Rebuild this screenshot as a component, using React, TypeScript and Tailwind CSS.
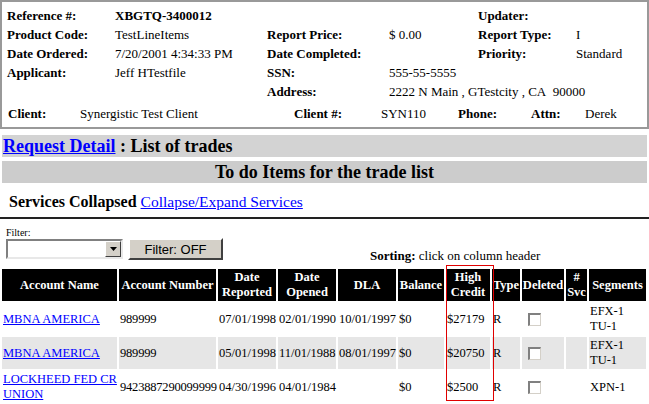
import React from "react";

const serif = "font-['Liberation_Serif','Times_New_Roman',serif]";

function Checkbox() {
  return (
    <div className="ml-[6px] w-[13px] h-[13px] bg-white border-t-2 border-l-2 border-b border-r border-t-[#808080] border-l-[#808080] border-b-[#d4d0c8] border-r-[#d4d0c8]" />
  );
}

type Trade = {
  name: string[];
  number: string;
  reported: string;
  opened: string;
  dla: string;
  balance: string;
  high: string;
  type: string;
  segments: string[];
};

const trades: Trade[] = [
  {
    name: ["MBNA AMERICA"],
    number: "989999",
    reported: "07/01/1998",
    opened: "02/01/1990",
    dla: "10/01/1997",
    balance: "$0",
    high: "$27179",
    type: "R",
    segments: ["EFX-1", "TU-1"],
  },
  {
    name: ["MBNA AMERICA"],
    number: "989999",
    reported: "05/01/1998",
    opened: "11/01/1988",
    dla: "08/01/1997",
    balance: "$0",
    high: "$20750",
    type: "R",
    segments: ["EFX-1", "TU-1"],
  },
  {
    name: ["LOCKHEED FED CR", "UNION"],
    number: "9423887290099999",
    reported: "04/30/1996",
    opened: "04/01/1984",
    dla: "",
    balance: "$0",
    high: "$2500",
    type: "R",
    segments: ["XPN-1"],
  },
];

export default function App() {
  return (
    <div className={`w-[649px] h-[404px] overflow-hidden bg-white text-black ${serif}`}>
      {/* Order summary */}
      <div className="h-[129px] border-2 border-[#999] pt-[4px] pl-[5px] text-[13px]">
        <div className="grid grid-cols-[108px_152px_122px_89px_98px_1fr] auto-rows-[19px] items-center whitespace-nowrap">
          <b>Reference #:</b>
          <b>XBGTQ-3400012</b>
          <span />
          <span />
          <b>Updater:</b>
          <span />

          <b>Product Code:</b>
          <span>TestLineItems</span>
          <b>Report Price:</b>
          <span>$ 0.00</span>
          <b>Report Type:</b>
          <span>I</span>

          <b>Date Ordered:</b>
          <span>7/20/2001 4:34:33 PM</span>
          <b>Date Completed:</b>
          <span />
          <b>Priority:</b>
          <span>Standard</span>

          <b>Applicant:</b>
          <span>Jeff HTestfile</span>
          <b>SSN:</b>
          <span>555-55-5555</span>
          <span />
          <span />

          <span />
          <span />
          <b>Address:</b>
          <span className="col-span-3">2222 N Main , GTestcity , CA&nbsp; 90000</span>
        </div>
        <div className="flex items-center h-[19px] mt-[3px] pl-[1px] whitespace-nowrap">
          <b className="w-[72px]">Client:</b>
          <span className="w-[214px]">Synergistic Test Client</span>
          <b className="w-[87px]">Client #:</b>
          <span className="w-[77px]">SYN110</span>
          <b className="w-[73px]">Phone:</b>
          <b className="w-[54px]">Attn:</b>
          <span>Derek</span>
        </div>
      </div>

      {/* Title bars */}
      <div className="mx-[2px] mt-[6px] h-[22px] bg-[#d3d3d3] pl-[1px] text-[18px] font-bold leading-[22px]">
        <a href="#" className="text-[#0000ff] underline">Request Detail</a> : List of trades
      </div>
      <div className="mx-[2px] mt-[4px] h-[22px] bg-[#cccccc] text-center text-[18px] font-bold leading-[22px]">
        To do Items for the trade list
      </div>

      <div className="mt-[10px] h-[18px] pl-[9px] text-[16px] leading-[18px]">
        <b>Services Collapsed</b>{" "}
        <a href="#" className="text-[#0000ff] underline text-[15.5px]">Collapse/Expand Services</a>
      </div>
      <div className="mt-[6px] h-[2px] bg-[#222]" />

      {/* Filter row */}
      <div className="flex items-end pl-[6px]">
        <div className="flex flex-col">
          <span className="mt-[9px] h-[10px] text-[10px] leading-[10px]">Filter:</span>
          <div className="mt-[1px] flex h-[20px] w-[117px] bg-white border-2 border-t-[#808080] border-l-[#808080] border-b-[#e8e8e8] border-r-[#e8e8e8]">
            <div className="flex-1" />
            <div className="flex w-[16px] items-center justify-center bg-[#d4d0c8] border border-t-white border-l-white border-b-[#404040] border-r-[#404040]">
              <svg width="7" height="4" viewBox="0 0 7 4">
                <path d="M0 0h7L3.5 4z" fill="#000" />
              </svg>
            </div>
          </div>
        </div>
        <button className="ml-[5px] mb-[-1px] h-[22px] w-[95px] bg-[#d4d0c8] border-2 border-t-white border-l-white border-b-[#404040] border-r-[#404040] font-['Liberation_Sans',Arial,sans-serif] text-[13px]">
          Filter: OFF
        </button>
        <div className="ml-[147px] mb-[-5px] text-[13px] leading-[16px] whitespace-nowrap">
          <b>Sorting:</b> click on column header
        </div>
      </div>

      {/* Trade table */}
      <div className="relative mt-[8px]">
        <table className="table-fixed w-[648px] border-separate border-spacing-[2px]">
          <thead>
            <tr className="h-[32px] bg-black text-white text-[12.5px] leading-[15px] font-bold">
              <th className="w-[115px] p-0">Account Name</th>
              <th className="w-[97px] p-0 whitespace-nowrap">Account Number</th>
              <th className="w-[58px] p-0">Date<br />Reported</th>
              <th className="w-[58px] p-0">Date<br />Opened</th>
              <th className="w-[58px] p-0">DLA</th>
              <th className="w-[46px] p-0">Balance</th>
              <th className="w-[44px] p-0">High<br />Credit</th>
              <th className="w-[28px] p-0">Type</th>
              <th className="w-[42px] p-0">Deleted</th>
              <th className="w-[21px] p-0">#<br />Svc</th>
              <th className="w-[57px] p-0">Segments</th>
            </tr>
          </thead>
          <tbody className="text-[12.5px] leading-[15px]">
            {trades.map((t, i) => (
              <tr key={i} className={`h-[32px] ${i === 1 ? "[&>td]:bg-[#e6e6e6]" : ""}`}>
                <td className="pl-[1px] pr-0">
                  <a href="#" className="text-[#0000ff] underline">
                    {t.name.map((n, j) => (
                      <React.Fragment key={j}>
                        {j > 0 && <br />}
                        {n}
                      </React.Fragment>
                    ))}
                  </a>
                </td>
                <td className="pl-[1px] pr-0 whitespace-nowrap tracking-[-0.2px]">{t.number}</td>
                <td className="pl-[1px] pr-0 whitespace-nowrap">{t.reported}</td>
                <td className="pl-[1px] pr-0 whitespace-nowrap">{t.opened}</td>
                <td className="pl-[1px] pr-0 whitespace-nowrap">{t.dla}</td>
                <td className="pl-[1px] pr-0">{t.balance}</td>
                <td className="pl-[1px] pr-0">{t.high}</td>
                <td className="pl-[1px] pr-0">{t.type}</td>
                <td className="p-0">
                  <Checkbox />
                </td>
                <td className="p-0" />
                <td className="pl-[1px] pr-0">
                  {t.segments.map((s, j) => (
                    <div key={j}>{s}</div>
                  ))}
                </td>
              </tr>
            ))}
          </tbody>
        </table>
        <div className="absolute left-[446px] top-[-2px] w-[48px] h-[136px] border border-[#e00000]" />
      </div>
    </div>
  );
}
